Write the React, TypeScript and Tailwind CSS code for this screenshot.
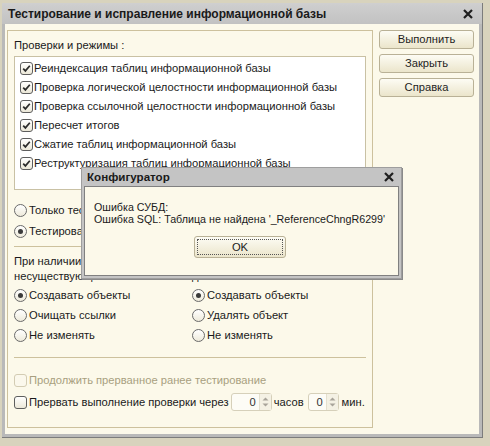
import React from "react";

const font = { fontFamily: '"Liberation Sans", Arial, sans-serif' };

const CheckBox = ({ checked, disabled }: { checked?: boolean; disabled?: boolean }) => (
    <span
        className={`flex h-[13px] w-[13px] shrink-0 items-center justify-center rounded-[3px] border ${
            disabled ? "border-[#d3ccb3] bg-[#fbf8ec]" : "border-[#5e5e5e] bg-gradient-to-b from-[#ffffff] to-[#ece8d8]"
        }`}
    >
        {checked && (
            <svg width="11" height="11" viewBox="0 0 11 11">
                <path d="M2.2 5.6 L4.4 7.9 L8.8 2.8" fill="none" stroke="#2b2b2b" strokeWidth="1.7" />
            </svg>
        )}
    </span>
);

const Radio = ({ checked }: { checked?: boolean }) => (
    <span className="flex h-[13px] w-[13px] shrink-0 items-center justify-center rounded-full border border-[#6a6a6a] bg-gradient-to-b from-[#ffffff] to-[#eeeadb]">
        {checked && <span className="h-[5px] w-[5px] rounded-full bg-[#3a3a3a]" />}
    </span>
);

const RadioRow = ({ label, checked }: { label: string; checked?: boolean }) => (
    <div className="flex h-[20px] items-center gap-[2px] whitespace-nowrap">
        <Radio checked={checked} />
        <span>{label}</span>
    </div>
);

const Spin = ({ width }: { width: string }) => (
    <div className={`flex h-[18px] ${width} items-center rounded-[3px] border border-[#d6d0ba] bg-[#fdfcf6]`}>
        <span className="flex-1 pr-[3px] text-right text-[#333]">0</span>
        <div className="flex h-full w-[12px] flex-col items-center justify-center gap-[2px] border-l border-[#e4e0cf] bg-[#f4f1e4]">
            <svg width="7" height="4" viewBox="0 0 7 4">
                <path d="M0.5 3.5 L3.5 0.5 L6.5 3.5 Z" fill="#a8a49a" />
            </svg>
            <svg width="7" height="4" viewBox="0 0 7 4">
                <path d="M0.5 0.5 L3.5 3.5 L6.5 0.5 Z" fill="#a8a49a" />
            </svg>
        </div>
    </div>
);

const CloseX = () => (
    <svg width="10" height="10" viewBox="0 0 10 10">
        <path d="M1 1 L9 9 M9 1 L1 9" stroke="#1f1f1f" strokeWidth="2.2" />
    </svg>
);

const WinButton = ({ label }: { label: string }) => (
    <button className="flex h-[19px] w-[95px] items-center justify-center rounded-[3px] border border-[#b9b196] bg-gradient-to-b from-[#fdfcf4] to-[#ebe5cb] text-[11.2px] text-[#1e1e1e]">
        {label}
    </button>
);

const checks = [
    "Реиндексация таблиц информационной базы",
    "Проверка логической целостности информационной базы",
    "Проверка ссылочной целостности информационной базы",
    "Пересчет итогов",
    "Сжатие таблиц информационной базы",
    "Реструктуризация таблиц информационной базы",
];

export default function App() {
    return (
        <div className="relative h-[446px] w-[490px] overflow-hidden bg-[#d8d3bd] pl-[2px] pt-[3px] text-[11.2px] text-[#1a1a1a]" style={font}>
            <div className="flex h-[435px] w-[481px] flex-col border-b border-r border-[#7c7c7c] bg-[#b9b9b9]">
                <div className="flex h-[21px] shrink-0 items-center justify-between bg-gradient-to-b from-[#cfcfcf] to-[#c2c2c2] pl-[6px] pr-[9px]">
                    <span className="text-[12px] font-bold text-[#1a1a1a]">Тестирование и исправление информационной базы</span>
                    <CloseX />
                </div>
                <div className="mb-[3px] ml-[3px] mr-[3px] flex flex-1 gap-[6px] bg-[#fcf9ea] pl-[2px] pt-[6px]">
                    <div className="flex h-[398px] w-[366px] flex-col border border-[#cdc19d] pl-[6px] pr-[6px] pt-[7px]">
                        <div className="leading-[14px]">Проверки и режимы :</div>
                        <div className="mt-[4px] h-[134px] border border-[#c9c1a4] bg-white pl-[5px] pt-[2px]">
                            {checks.map((c) => (
                                <div key={c} className="flex h-[19px] items-center gap-[1px]">
                                    <CheckBox checked />
                                    <span className="whitespace-nowrap">{c}</span>
                                </div>
                            ))}
                        </div>
                        <div className="mt-[10px] flex flex-col gap-[1px]">
                            <RadioRow label="Только тестирование" />
                            <RadioRow label="Тестирование и исправление" checked />
                        </div>
                        <div className="mt-[5px] h-px bg-[#cdc19d]" />
                        <div className="mt-[7px] grid grid-cols-[178px_1fr]">
                            <div className="whitespace-nowrap leading-[15px]">
                                При наличии ссылок на
                                <br />
                                несуществующие объекты:
                            </div>
                            <div className="whitespace-nowrap leading-[15px]">
                                При частичной потере
                                <br />
                                данных объектов:
                            </div>
                            <div className="mt-px">
                                <RadioRow label="Создавать объекты" checked />
                                <RadioRow label="Очищать ссылки" />
                                <RadioRow label="Не изменять" />
                            </div>
                            <div className="mt-px">
                                <RadioRow label="Создавать объекты" checked />
                                <RadioRow label="Удалять объект" />
                                <RadioRow label="Не изменять" />
                            </div>
                        </div>
                        <div className="mt-[12px] h-px bg-[#cdc19d]" />
                        <div className="mt-[12px] flex h-[20px] items-center gap-[2px] whitespace-nowrap text-[#a89f80]">
                            <CheckBox disabled />
                            <span>Продолжить прерванное ранее тестирование</span>
                        </div>
                        <div className="mt-[2px] flex h-[20px] items-center whitespace-nowrap">
                            <CheckBox />
                            <span className="ml-[2px]">Прервать выполнение проверки через</span>
                            <span className="ml-[2px]">
                                <Spin width="w-[41px]" />
                            </span>
                            <span className="ml-[2px]">часов</span>
                            <span className="ml-[4px]">
                                <Spin width="w-[31px]" />
                            </span>
                            <span className="ml-[3px]">мин.</span>
                        </div>
                    </div>
                    <div className="flex flex-col gap-[5px]">
                        <WinButton label="Выполнить" />
                        <WinButton label="Закрыть" />
                        <WinButton label="Справка" />
                    </div>
                </div>
            </div>

            <div className="absolute left-[81px] top-[167px] flex h-[112px] w-[321px] flex-col border border-[#9e9e9e] bg-[#c4c4c4] shadow-[1px_1px_0_#8a8a8a]">
                <div className="flex h-[18px] shrink-0 items-center justify-between pl-[5px] pr-[7px]">
                    <span className="text-[11.6px] font-bold">Конфигуратор</span>
                    <CloseX />
                </div>
                <div className="mb-[2px] ml-[2px] mr-[2px] flex flex-1 flex-col border border-[#808080] bg-[#fcf9ea] pl-[9px] pt-[14px] text-[10.7px]">
                    <div className="leading-[12px]">Ошибка СУБД:</div>
                    <div className="whitespace-nowrap leading-[12px]">Ошибка SQL: Таблица не найдена '_ReferenceChngR6299'</div>
                    <div className="mt-[11px] flex justify-center pr-[12px]">
                        <button className="flex h-[22px] w-[92px] items-center justify-center rounded-[3px] border border-[#b9b196] bg-gradient-to-b from-[#fdfcf4] to-[#ebe5cb] p-[2px] text-[11.2px]">
                            <span className="flex h-full w-full items-center justify-center border border-dotted border-[#555]">OK</span>
                        </button>
                    </div>
                </div>
            </div>
        </div>
    );
}
